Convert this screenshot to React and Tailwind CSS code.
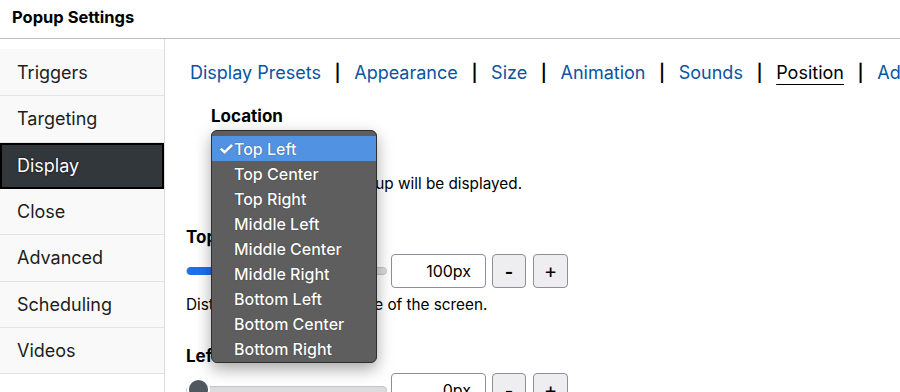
import React from "react";

const menu = ["Triggers", "Targeting", "Display", "Close", "Advanced", "Scheduling", "Videos"];
const tabs = ["Display Presets", "Appearance", "Size", "Animation", "Sounds", "Position", "Advanced"];
const locations = [
  "Top Left",
  "Top Center",
  "Top Right",
  "Middle Left",
  "Middle Center",
  "Middle Right",
  "Bottom Left",
  "Bottom Center",
  "Bottom Right",
];

const Stepper = ({ value }) => (
  <div className="flex items-center">
    <div className="h-[34px] w-[95px] ml-[4px] rounded-[4px] border border-[#8c8f94] bg-white flex items-center justify-end pr-[14px] text-[16px] text-black">
      {value}
    </div>
    <button className="ml-[6px] h-[34px] w-[34px] rounded-[4px] border border-[#8c8f94] bg-[#eeeef0] text-[18px] font-bold text-black flex items-center justify-center">
      -
    </button>
    <button className="ml-[7px] h-[34px] w-[35px] rounded-[4px] border border-[#8c8f94] bg-[#eeeef0] text-[20px] text-black flex items-center justify-center">
      +
    </button>
  </div>
);

export default function App() {
  return (
    <div
      className="w-[900px] h-[392px] overflow-hidden bg-white text-black"
      style={{ fontFamily: 'Inter, "Liberation Sans", Arial, sans-serif' }}
    >
      <div className="h-[39px] border-b border-[#bdbdbd] flex items-center pl-[12px] pb-[3px] text-[16.5px] font-bold">
        Popup Settings
      </div>
      <div className="flex h-[353px]">
        <div className="w-[165px] shrink-0 border-r border-[#dcdcdc] pt-[10px]">
          <div className="bg-[#f9f9f9] pt-[1px]">
            {menu.map((m) =>
              m === "Display" ? (
                <div
                  key={m}
                  className="h-[46.33px] flex items-center pl-[15px] bg-[#32373c] border-2 border-black text-white text-[18px] [text-shadow:0_0_2px_#000]"
                >
                  {m}
                </div>
              ) : (
                <div
                  key={m}
                  className="h-[46.33px] flex items-center pl-[17px] border-b border-[#e4e4e4] text-[18px] text-[#1d1d1d]"
                >
                  {m}
                </div>
              )
            )}
          </div>
        </div>

        <div className="relative flex-1 pl-[21px] pt-[22px] min-w-0">
          <div className="flex items-center whitespace-nowrap text-[18px] leading-[24px] pl-[4px]">
            {tabs.map((t, i) => (
              <React.Fragment key={t}>
                {i > 0 && (
                  <span className="mx-[13.6px] text-black font-semibold text-[17px]">|</span>
                )}
                <span
                  className={
                    t === "Position"
                      ? "text-black underline underline-offset-[5px]"
                      : "text-[#0a54a0]"
                  }
                >
                  {t}
                </span>
              </React.Fragment>
            ))}
          </div>

          <div className="pl-[25px] mt-[20px]">
            <div className="text-[17px] font-bold leading-[22px]">Location</div>
            <div className="mt-[4px] h-[30px] w-[166px] rounded-[5px] border border-[#8c8f94] bg-white" />
            <div className="mt-[13px] text-[15.3px] leading-[20px]">
              Choose where the popup will be displayed.
            </div>
          </div>

          <div className="mt-[32px] text-[17px] font-bold leading-[22px]">Top</div>
          <div className="mt-[6px] flex items-center">
            <div className="relative w-[201px] h-[8px] rounded-full bg-[#dcdcde] border border-[#c3c4c7]">
              <div className="absolute left-0 top-[-1px] h-[8px] w-[100px] rounded-full bg-[#1e6ff0]" />
            </div>
            <Stepper value="100px" />
          </div>
          <div className="mt-[7px] text-[15.3px] leading-[20px]">
            Distance from the top edge of the screen.
          </div>

          <div className="mt-[30px] text-[17px] font-bold leading-[22px]">Left</div>
          <div className="mt-[6px] flex items-center">
            <div className="relative w-[201px] h-[8px] rounded-full bg-[#dcdcde] border border-[#c3c4c7]">
              <div className="absolute left-0 top-[-9px] h-[23px] w-[23px] rounded-full bg-[#50575e] border-2 border-white" />
            </div>
            <Stepper value="0px" />
          </div>

          {/* open select menu */}
          <div className="absolute left-[46px] top-[91px] w-[166px] h-[233px] rounded-[6px] border border-[#2e2e2e] bg-[#5e5e5e] shadow-[0_6px_16px_rgba(0,0,0,0.35)] pt-[5px]">
            {locations.map((l, i) => (
              <div
                key={l}
                className={
                  "h-[25px] flex items-center text-[16px] font-medium text-white [text-shadow:0_0_1px_rgba(0,0,0,0.6)] " +
                  (i === 0 ? "bg-[#5192e2]" : "")
                }
              >
                <span className="w-[22px] pl-[6px] text-[18px] font-bold leading-none">
                  {i === 0 ? "✓" : ""}
                </span>
                {l}
              </div>
            ))}
          </div>
        </div>
      </div>
    </div>
  );
}
